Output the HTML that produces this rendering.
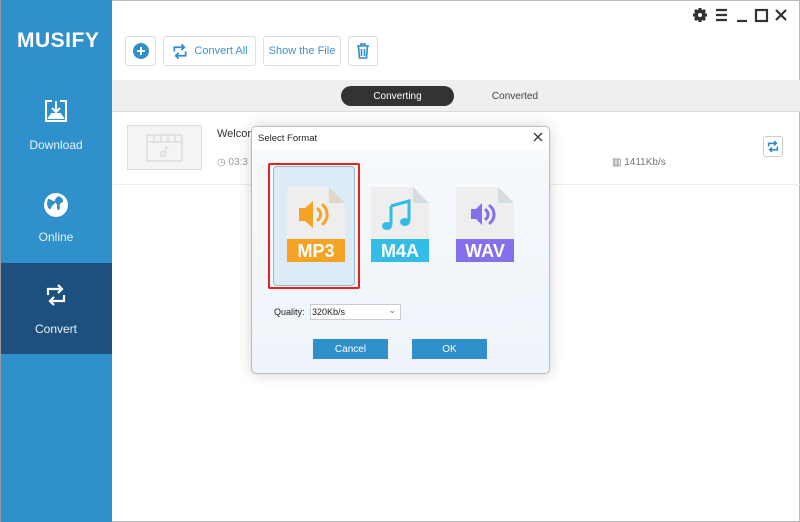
<!DOCTYPE html>
<html><head><style>
*{margin:0;padding:0;box-sizing:border-box}
body{width:800px;height:522px;overflow:hidden;font-family:"Liberation Sans",sans-serif;background:#fff;position:relative}
.abs{position:absolute}
.side{left:0;top:0;width:112px;height:522px;background:#2f90cb;border-left:1px solid #999}
.nav{position:absolute;left:0;width:112px;color:#e8f3fb;font-size:12px;text-align:center}
.btn{position:absolute;top:36px;height:30px;border:1px solid #ddd;border-radius:3px;color:#3f94cf;font-size:11px;display:flex;align-items:center;justify-content:center;gap:5px;background:#fff}
.file{position:absolute;width:58px;height:75px}
.cb{display:flex;align-items:center;justify-content:center}
</style></head><body>
<div class="abs" style="left:0;top:0;width:800px;height:522px;border:1px solid #bbb"></div>
<div class="abs side"></div>
<div class="abs" style="left:17px;top:29px;color:#fff;font-weight:bold;font-size:21px;letter-spacing:.5px">MUSIFY</div>
<svg class="abs" style="left:44px;top:99px" width="24" height="24" viewBox="0 0 24 24" fill="none" stroke="#fff" stroke-width="2"><path d="M8 2H2v20h20V2h-6"/><path d="M12 2v11M8 9l4 4 4-4"/><path d="M5 19l3-4h8l3 4z" fill="#fff"/></svg>
<div class="nav" style="top:138px">Download</div>
<svg class="abs" style="left:43px;top:192px" width="26" height="26" viewBox="0 0 26 26"><circle cx="13" cy="13" r="12" fill="#fff"/><path d="M5 7c3 0 4 2 6 2s1 3-1 4-1 4-3 4-3-4-3-6zM15 4c2 1 4 1 5 4s-2 2-3 4 1 4-1 6c-2 1-2-3-2-5s-3-2-2-5 2-2 3-4z" fill="#2f90cb"/></svg>
<div class="nav" style="top:230px">Online</div>
<div class="abs" style="left:1px;top:263px;width:111px;height:91px;background:#1d4f7f"></div>
<svg class="abs" style="left:45px;top:283px" width="22" height="24" viewBox="0 0 22 24" fill="none" stroke="#fff" stroke-width="2.2"><path d="M3 12V6h14M13 2l4 4-4 4"/><path d="M19 12v6H5M9 22l-4-4 4-4"/></svg>
<div class="nav" style="top:322px">Convert</div>

<div class="btn" style="left:125px;width:31px"><svg width="16" height="16"><circle cx="8" cy="8" r="8" fill="#2f8fcb"/><path d="M8 4v8M4 8h8" stroke="#fff" stroke-width="2"/></svg></div>
<div class="btn" style="left:163px;width:93px"><svg width="18" height="17" viewBox="0 0 22 24" fill="none" stroke="#2f8fcb" stroke-width="2.5"><path d="M3 12V6h14M13 2l4 4-4 4"/><path d="M19 12v6H5M9 22l-4-4 4-4"/></svg>Convert All</div>
<div class="btn" style="left:263px;width:78px">Show the File</div>
<div class="btn" style="left:348px;width:30px"><svg width="14" height="16" viewBox="0 0 14 16" fill="none" stroke="#2f8fcb" stroke-width="1.6"><path d="M1 3h12M5 3V1h4v2M2.5 3l1 12h7l1-12M5.5 6v7M8.5 6v7"/></svg></div>

<svg class="abs" style="left:690px;top:6px" width="104" height="18" viewBox="0 0 104 18" fill="none" stroke="#333" stroke-width="2.2">
 <circle cx="10" cy="9" r="4" stroke-width="3.5"/><path d="M10 2v14M3 9h14M5 4l10 10M15 4L5 14" stroke-width="3"/><circle cx="10" cy="9" r="2" fill="#fff" stroke="none"/>
 <path d="M26 4h11M26 9h11M26 14h11"/>
 <path d="M47 15h10"/>
 <rect x="66" y="4" width="11" height="11"/>
 <path d="M86 4l10 10M96 4L86 14"/>
</svg>

<div class="abs" style="left:112px;top:80px;width:688px;height:32px;background:#efefef;border-bottom:1px solid #ddd"></div>
<div class="abs cb" style="left:341px;top:86px;width:113px;height:20px;border-radius:10px;background:#333;color:#fff;font-size:10px">Converting</div>
<div class="abs cb" style="left:480px;top:86px;width:70px;height:20px;font-size:10px;color:#444">Converted</div>

<div class="abs" style="left:127px;top:125px;width:75px;height:45px;border:1px solid #ddd;background:#f4f4f4"></div>
<svg class="abs" style="left:146px;top:134px" width="38" height="28" viewBox="0 0 38 28" fill="none" stroke="#ddd" stroke-width="1.5"><rect x="1" y="1" width="35" height="26"/><path d="M1 8h35M8 1v7M15 1v7M22 1v7M29 1v7"/><circle cx="17" cy="20" r="2.5"/><path d="M19.5 20v-7l3 2"/></svg>
<div class="abs" style="left:217px;top:128px;font-size:11px;color:#333">Welcome</div>
<div class="abs" style="left:217px;top:157px;font-size:10px;color:#999">◷ 03:3</div>
<div class="abs" style="left:612px;top:157px;font-size:10px;color:#777">▥ 1411Kb/s</div>
<div class="abs cb" style="left:763px;top:136px;width:20px;height:21px;border:1px solid #ccc;border-radius:3px"><svg width="12" height="13" viewBox="0 0 22 24" fill="none" stroke="#2f8fcb" stroke-width="3"><path d="M3 12V6h14M13 2l4 4-4 4"/><path d="M19 12v6H5M9 22l-4-4 4-4"/></svg></div>
<div class="abs" style="left:112px;top:184px;width:688px;height:1px;background:#eee"></div>

<div class="abs" style="left:251px;top:126px;width:299px;height:248px;border:1px solid #bbb;border-radius:5px;background:linear-gradient(#f7fafd,#eef4fa);box-shadow:0 0 14px rgba(0,0,0,.18);overflow:hidden">
 <div style="height:23px;background:#fff;font-size:9.5px;color:#222;padding:6px 6px">Select Format</div>
</div>
<svg class="abs" style="left:533px;top:132px" width="10" height="10" fill="none" stroke="#333" stroke-width="1.3"><path d="M1 1l8 8M9 1L1 9"/></svg>
<div class="abs" style="left:268px;top:163px;width:92px;height:126px;border:2px solid #e8201e;border-radius:2px"></div>
<div class="abs" style="left:273px;top:166px;width:82px;height:120px;border:1px solid #9ab8d4;border-radius:4px;background:#ddebf7"></div>

<svg class="file" style="left:287px;top:187px" viewBox="0 0 58 75"><path d="M0 0h42l16 16v59H0z" fill="#eeeeee"/><path d="M42 0v16h16z" fill="#ddd8c8"/><rect x="0" y="52" width="58" height="23" fill="#f5a327"/><text x="29" y="70" font-family="Liberation Sans" font-weight="bold" font-size="18" fill="#fff" text-anchor="middle">MP3</text><path d="M12 21h6l8-7v27l-8-7h-6z" fill="#f5a327"/><path d="M31 22a7 7 0 0 1 0 11M36 18a13 13 0 0 1 0 19" stroke="#f5a327" stroke-width="3" fill="none" stroke-linecap="round"/></svg>
<svg class="file" style="left:371px;top:187px" viewBox="0 0 58 75"><path d="M0 0h42l16 16v59H0z" fill="#eeeeee"/><path d="M42 0v16h16z" fill="#d5dde3"/><rect x="0" y="52" width="58" height="23" fill="#33bde6"/><text x="29" y="70" font-family="Liberation Sans" font-weight="bold" font-size="18" fill="#fff" text-anchor="middle">M4A</text><path d="M20 19l18-5v20" stroke="#33bde6" stroke-width="3" fill="none"/><path d="M20 19v19" stroke="#33bde6" stroke-width="3"/><ellipse cx="16" cy="39" rx="5" ry="4" fill="#33bde6"/><ellipse cx="34" cy="35" rx="5" ry="4" fill="#33bde6"/></svg>
<svg class="file" style="left:456px;top:187px" viewBox="0 0 58 75"><path d="M0 0h42l16 16v59H0z" fill="#eeeeee"/><path d="M42 0v16h16z" fill="#d5dde3"/><rect x="0" y="52" width="58" height="23" fill="#8470ea"/><text x="29" y="70" font-family="Liberation Sans" font-weight="bold" font-size="18" fill="#fff" text-anchor="middle">WAV</text><path d="M15 22h5l6-6v22l-6-6h-5z" fill="#8470ea"/><path d="M30 23a6 6 0 0 1 0 9M34 19a11 11 0 0 1 0 17" stroke="#8470ea" stroke-width="3" fill="none" stroke-linecap="round"/></svg>

<div class="abs" style="left:274px;top:307px;font-size:9px;color:#222">Quality:</div>
<div class="abs" style="left:310px;top:304px;width:91px;height:16px;border:1px solid #ccc;background:#fff;font-size:9px;padding:2px 1px;color:#222">320Kb/s<span style="position:absolute;right:4px;top:0;color:#666">⌄</span></div>
<div class="abs cb" style="left:313px;top:339px;width:75px;height:20px;background:#2f8fcb;color:#fff;font-size:10px">Cancel</div>
<div class="abs cb" style="left:412px;top:339px;width:75px;height:20px;background:#2f8fcb;color:#fff;font-size:10px">OK</div>
</body></html>
